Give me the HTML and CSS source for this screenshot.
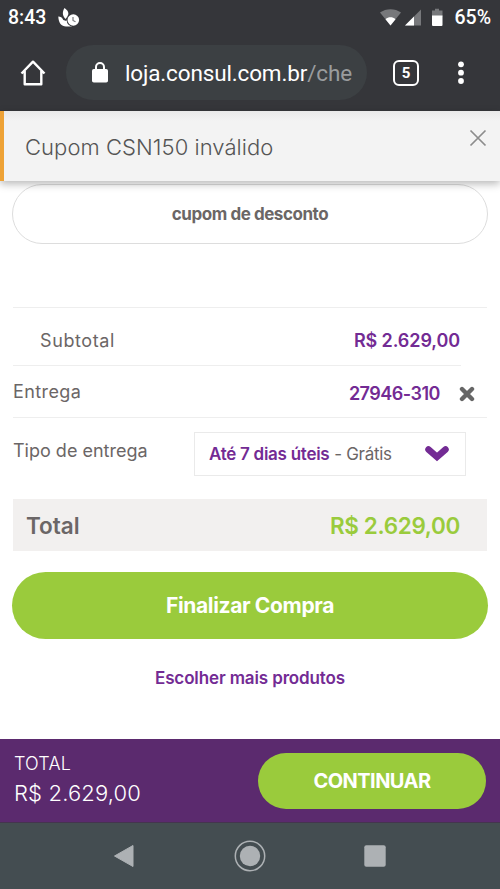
FILE: index.html
```html
<!DOCTYPE html>
<html lang="pt-BR">
<head>
<meta charset="utf-8">
<meta name="viewport" content="width=device-width, initial-scale=1">
<title>Consul</title>
<link rel="stylesheet" href="styles.css">
</head>
<body>
<header class="chrome">
  <div class="status">
    <span class="clock">8:43</span>
    <svg class="status-app" width="22" height="20" viewBox="0 0 22 20"><path fill="#fff" d="M6.500 0c3.500 2.500 5 5 3 8.500L7.500 11C4.500 8 4 4 6.500 0zM0.300 8.500c2.500 0 3.700.8 5 3.500l3 1 2-5 3.500 2v8.500H8c-4.500 0-7.500-3.500-7.700-10z"/><circle cx="15.300" cy="12" r="6.700" fill="#35363a"/><circle cx="15.300" cy="12" r="5.800" fill="#fff"/><path d="M15 9v3.500l2.500 1.300" fill="none" stroke="#77787c" stroke-width="1.200"/></svg>
    <span class="spacer"></span>
    <svg width="64" height="20" viewBox="0 0 64 20"><path fill="#77787b" d="M0 4.500C6 0 15 0 21 4.500L10.500 17.500z"/><path fill="#fff" d="M5.500 11.300c3-2.600 7-2.600 10 0l-5 6.200z"/><path fill="#77787b" d="M41 1.500v16H25z"/><path fill="#fff" d="M34 8.500v9h-9z"/><path fill="#77787b" d="M52 2.500h3V.8h4v1.700h3.500v6H52z"/><path fill="#fff" d="M52 7.500h10.500V17q0 1-1 1H53q-1 0-1-1z"/></svg>
    <span class="percent">65%</span>
  </div>
  <div class="toolbar">
    <svg class="home" width="26" height="28" viewBox="0 0 26 28"><path d="M1.500 14.500L13 2.700l11.500 11.800M4.700 12v13.300h16.600V12" fill="none" stroke="#fff" stroke-width="2.400" stroke-linejoin="round"/></svg>
    <div class="address">
      <svg width="16" height="21" viewBox="0 0 16 21"><rect y="7" width="16" height="13.500" rx="1.800" fill="#fff"/><path d="M4 8V5a4 4 0 0 1 8 0v3" fill="none" stroke="#fff" stroke-width="2"/></svg>
      <span class="url">loja.consul.com.br<span class="path">/che</span></span>
    </div>
    <span class="tabs">5</span>
    <svg width="8" height="26" viewBox="0 0 8 26" fill="#fff"><circle cx="4" cy="4.300" r="2.900"/><circle cx="4" cy="12.700" r="2.900"/><circle cx="4" cy="21" r="2.900"/></svg>
  </div>
</header>
<div class="toast">
  <span class="toast-text">Cupom CSN150 inválido</span>
  <svg width="18" height="18" viewBox="0 0 18 18"><path d="M1.500 1.500l15 15m0-15l-15 15" stroke="#8c8c8c" stroke-width="1.700"/></svg>
</div>
<main class="page">
  <div class="coupon"><span class="coupon-text">cupom de desconto</span></div>
  <section class="summary">
    <div class="row subtotal"><span class="t-subtotal">Subtotal</span><b class="t-subvalue">R$ 2.629,00</b></div>
    <div class="row delivery">
      <span class="t-entrega">Entrega</span>
      <span class="zip"><b class="t-zip">27946-310</b><svg width="16" height="16" viewBox="0 0 16 16"><path d="M3 3l10 10m0-10L3 13" stroke="#666" stroke-width="4.400" stroke-linecap="round"/></svg></span>
    </div>
    <div class="row kind">
      <span class="t-kind">Tipo de entrega</span>
      <div class="select"><span class="option"><b class="t-days">Até 7 dias úteis</b> <span class="t-free">- Grátis</span></span><svg width="24" height="16" viewBox="0 0 24 16"><path d="M3.500 3.500L12 11l8.500-7.500" fill="none" stroke="#732b94" stroke-width="6.500" stroke-linecap="round"/></svg></div>
    </div>
    <div class="total"><b class="t-total">Total</b><b class="t-totalvalue">R$ 2.629,00</b></div>
  </section>
  <div class="finish"><span class="t-finish">Finalizar Compra</span></div>
  <a class="more"><span class="t-more">Escolher mais produtos</span></a>
</main>
<footer class="paybar">
  <div class="paytext"><span class="t-paylabel">TOTAL</span><span class="t-payvalue">R$ 2.629,00</span></div>
  <div class="continue"><span class="t-continue">CONTINUAR</span></div>
</footer>
<nav class="android">
  <svg width="22" height="24" viewBox="0 0 22 24"><path d="M1.500 12L20 1.500v21z" fill="#adb1b4" stroke="#adb1b4" stroke-linejoin="round"/></svg>
  <svg width="32" height="32" viewBox="0 0 32 32"><circle cx="16" cy="16" r="14.700" fill="none" stroke="#adb1b4" stroke-width="1.500"/><circle cx="16" cy="16" r="10.200" fill="#adb1b4"/></svg>
  <svg width="22" height="22" viewBox="0 0 22 22"><rect x=".3" y=".3" width="21.400" height="21.400" rx="2" fill="#adb1b4"/></svg>
</nav>
</body>
</html>
```
FILE: styles.css
```css
* { box-sizing: border-box; }
body {
  margin: 0;
  width: 500px;
  height: 889px;
  overflow: hidden;
  background: #fff;
  color: #6b6666;
  font-family: Inter, "Noto Sans", sans-serif;
  font-size: 18px;
  display: flex;
  flex-direction: column;
}
svg { display: block; flex: none; }
span, b { white-space: nowrap; }
b { font-weight: 600; }
.chrome { height: 111px; flex: none; background: #35363a; color: #fff; font-family: Roboto, sans-serif; }
.status { height: 35px; display: flex; align-items: center; padding: 0 9px 0 8px; font-size: 19.5px; font-weight: 500; }
.status-app { margin-left: 12px; }
.spacer { flex: 1; }
.percent { margin-left: 10px; }
.toolbar { height: 75px; display: flex; align-items: center; padding: 0 35px 0 20px; }
.address { width: 301px; height: 55px; margin-left: 20px; margin-right: 26px; border-radius: 28px; background: #3c4043; display: flex; align-items: center; padding-left: 26px; }
.url { margin-left: 17px; font-size: 22.5px; letter-spacing: -.15px; }
.path { color: #999c9e; }
.tabs { width: 26px; height: 26px; border: 2.500px solid #fff; border-radius: 6px; display: grid; place-items: center; font-size: 15px; font-weight: 700; margin-right: 38px; }
.toast { height: 70px; flex: none; display: flex; justify-content: space-between; align-items: flex-start; padding: 18px 13px 0 21px; border-left: 4px solid #eea236; background: linear-gradient(#e9e9e9, #f3f3f3 10px); box-shadow: 0 3px 8px rgba(0,0,0,.28); z-index: 1; }
.toast-text { font-size: 22px; font-weight: 300; line-height: 36px; color: #555; letter-spacing: .06px; }
.page { flex: 1; padding: 3px 13px 0; }
.coupon { height: 60px; margin: 0 -1px; border: 1px solid #ddd; border-radius: 30px; display: grid; place-items: center; font-size: 17px; font-weight: 700; }
.coupon-text { letter-spacing: -.45px; }
.summary { margin-top: 63px; }
.row { display: flex; justify-content: space-between; border-top: 1px solid #eee; }
.subtotal { height: 58px; align-items: center; padding: 8px 27px 0 27px; }
.subtotal b, .zip b, .t-days { color: #732b94; }
.t-subtotal { letter-spacing: .6px; }
.t-subvalue { letter-spacing: -.1px; }
.delivery { height: 52px; padding-right: 12px; line-height: 52px; border-image: linear-gradient(90deg, #eee 447px, transparent 447px) 1; }
.t-entrega { letter-spacing: .4px; }
.zip { display: flex; align-items: center; gap: 19px; padding-top: 4px; }
.t-zip { letter-spacing: -.5px; }
.kind { height: 82px; padding: 14px 21px 0 0; }
.t-kind { line-height: 37px; }
.select { width: 272px; height: 44px; border: 1px solid #eaeaea; display: flex; align-items: center; justify-content: space-between; padding: 0 16px 0 14px; font-size: 17px; }
.t-days { letter-spacing: -.27px; }
.t-free { letter-spacing: -.3px; }
.total { height: 52px; background: #f2f0ef; display: flex; justify-content: space-between; align-items: center; padding: 0 27px 0 13px; font-size: 22.5px; }
.t-totalvalue { color: #9acb3c; letter-spacing: -.35px; }
.finish { height: 67px; margin: 21px -1px 0; border-radius: 34px; background: #9acb3c; color: #fff; display: grid; place-items: center; font-size: 21px; font-weight: 700; }
.t-finish { letter-spacing: -.35px; }
.more { display: grid; place-items: center; height: 78px; color: #732b94; font-size: 17px; font-weight: 600; }
.t-more { letter-spacing: -.13px; }
.paybar { height: 84px; flex: none; background: #5b2a6e; border-bottom: 1px solid #45344f; display: flex; justify-content: space-between; align-items: center; padding: 0 14px; color: #fff; font-weight: 300; }
.paytext { display: flex; flex-direction: column; padding-bottom: 3px; }
.t-paylabel { font-size: 18px; line-height: 27px; letter-spacing: .2px; }
.t-payvalue { font-size: 22px; line-height: 32px; letter-spacing: .15px; }
.continue { width: 228px; height: 56px; border-radius: 28px; background: #9acb3c; display: grid; place-items: center; font-size: 20px; font-weight: 700; }
.t-continue { letter-spacing: -.55px; }
.android { height: 66px; flex: none; background: #444d51; display: flex; align-items: center; justify-content: space-between; padding: 0 114px 0 113px; }
```
